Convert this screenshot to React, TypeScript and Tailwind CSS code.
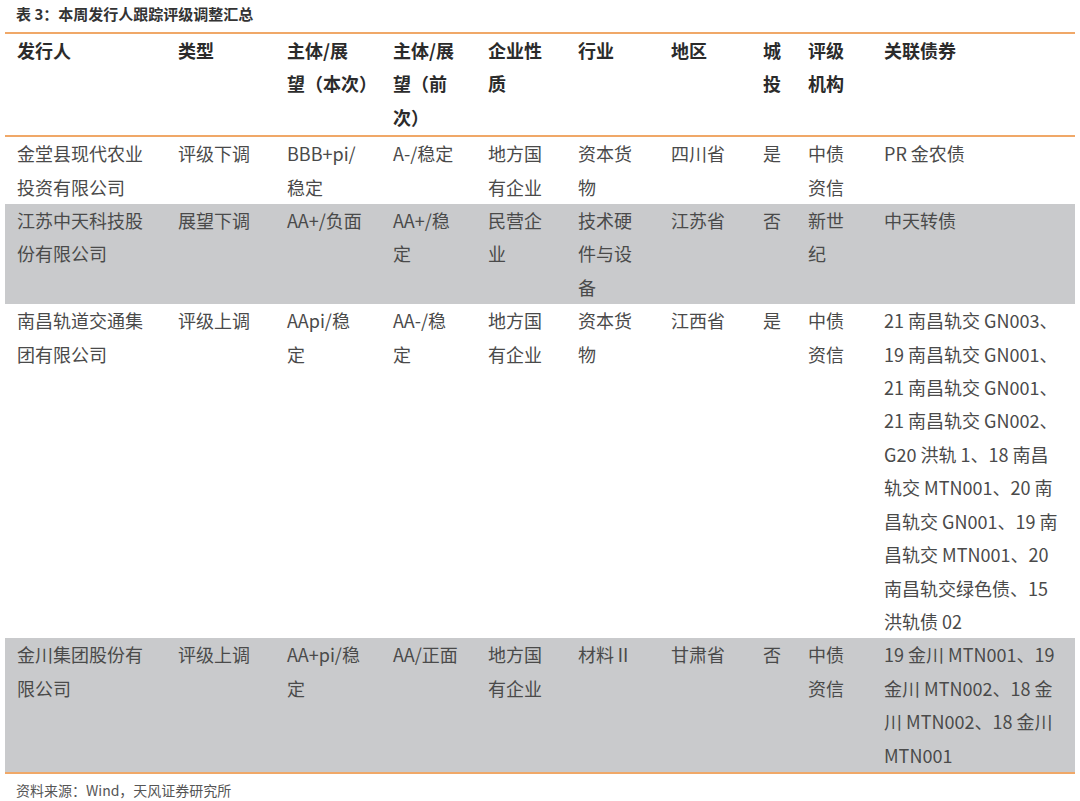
import React from 'react';

const cols = 'grid grid-cols-[161px_109px_106px_95px_90px_93px_92px_45px_76px_203px]';

const header: string[][] = [
  ['发行人'],
  ['类型'],
  ['主体/展', '望（本次）'],
  ['主体/展', '望（前', '次）'],
  ['企业性', '质'],
  ['行业'],
  ['地区'],
  ['城', '投'],
  ['评级', '机构'],
  ['关联债券'],
];

const rows: { gray: boolean; cells: string[][] }[] = [
  {
    gray: false,
    cells: [
      ['金堂县现代农业', '投资有限公司'],
      ['评级下调'],
      ['BBB+pi/', '稳定'],
      ['A-/稳定'],
      ['地方国', '有企业'],
      ['资本货', '物'],
      ['四川省'],
      ['是'],
      ['中债', '资信'],
      ['PR 金农债'],
    ],
  },
  {
    gray: true,
    cells: [
      ['江苏中天科技股', '份有限公司'],
      ['展望下调'],
      ['AA+/负面'],
      ['AA+/稳', '定'],
      ['民营企', '业'],
      ['技术硬', '件与设', '备'],
      ['江苏省'],
      ['否'],
      ['新世', '纪'],
      ['中天转债'],
    ],
  },
  {
    gray: false,
    cells: [
      ['南昌轨道交通集', '团有限公司'],
      ['评级上调'],
      ['AApi/稳', '定'],
      ['AA-/稳', '定'],
      ['地方国', '有企业'],
      ['资本货', '物'],
      ['江西省'],
      ['是'],
      ['中债', '资信'],
      [
        '21 南昌轨交 GN003、',
        '19 南昌轨交 GN001、',
        '21 南昌轨交 GN001、',
        '21 南昌轨交 GN002、',
        'G20 洪轨 1、18 南昌',
        '轨交 MTN001、20 南',
        '昌轨交 GN001、19 南',
        '昌轨交 MTN001、20',
        '南昌轨交绿色债、15',
        '洪轨债 02',
      ],
    ],
  },
  {
    gray: true,
    cells: [
      ['金川集团股份有', '限公司'],
      ['评级上调'],
      ['AA+pi/稳', '定'],
      ['AA/正面'],
      ['地方国', '有企业'],
      ['材料Ⅱ'],
      ['甘肃省'],
      ['否'],
      ['中债', '资信'],
      ['19 金川 MTN001、19', '金川 MTN002、18 金', '川 MTN002、18 金川', 'MTN001'],
    ],
  },
];

const Cell = ({ lines, bold }: { lines: string[]; bold?: boolean }) => (
  <div className="pl-3 whitespace-nowrap">
    {lines.map((l, i) => (
      <div key={i} className={bold ? 'font-bold text-[#2b2b2b]' : ''}>
        {l}
      </div>
    ))}
  </div>
);

export default function App() {
  return (
    <div
      className="w-[1080px] h-[801px] bg-white text-[#4a4a4a] overflow-hidden"
      style={{ fontFamily: '"Noto Sans CJK SC", "Noto Sans", sans-serif' }}
    >
      <div className="pl-[16px] pt-[3px] h-[32px] text-[15px] font-bold text-[#333]">表 3：本周发行人跟踪评级调整汇总</div>
      <div className="mx-[5px] w-[1070px] border-t-2 border-[#f0a868] text-[18px] leading-[33.4px]">
        <div className={`${cols} pb-[1px]`}>
          {header.map((h, i) => (
            <Cell key={i} lines={h} bold />
          ))}
        </div>
        <div className="border-t-2 border-[#f0a868]">
          {rows.map((r, i) => (
            <div key={i} className={`${cols} ${r.gray ? 'bg-[#c9cacc]' : ''}`}>
              {r.cells.map((c, j) => (
                <Cell key={j} lines={c} />
              ))}
            </div>
          ))}
        </div>
        <div className="border-t-2 border-[#f0a868]" />
      </div>
      <div className="pl-[16px] pt-[6px] text-[14px] text-[#555]">资料来源：Wind，天风证券研究所</div>
    </div>
  );
}
